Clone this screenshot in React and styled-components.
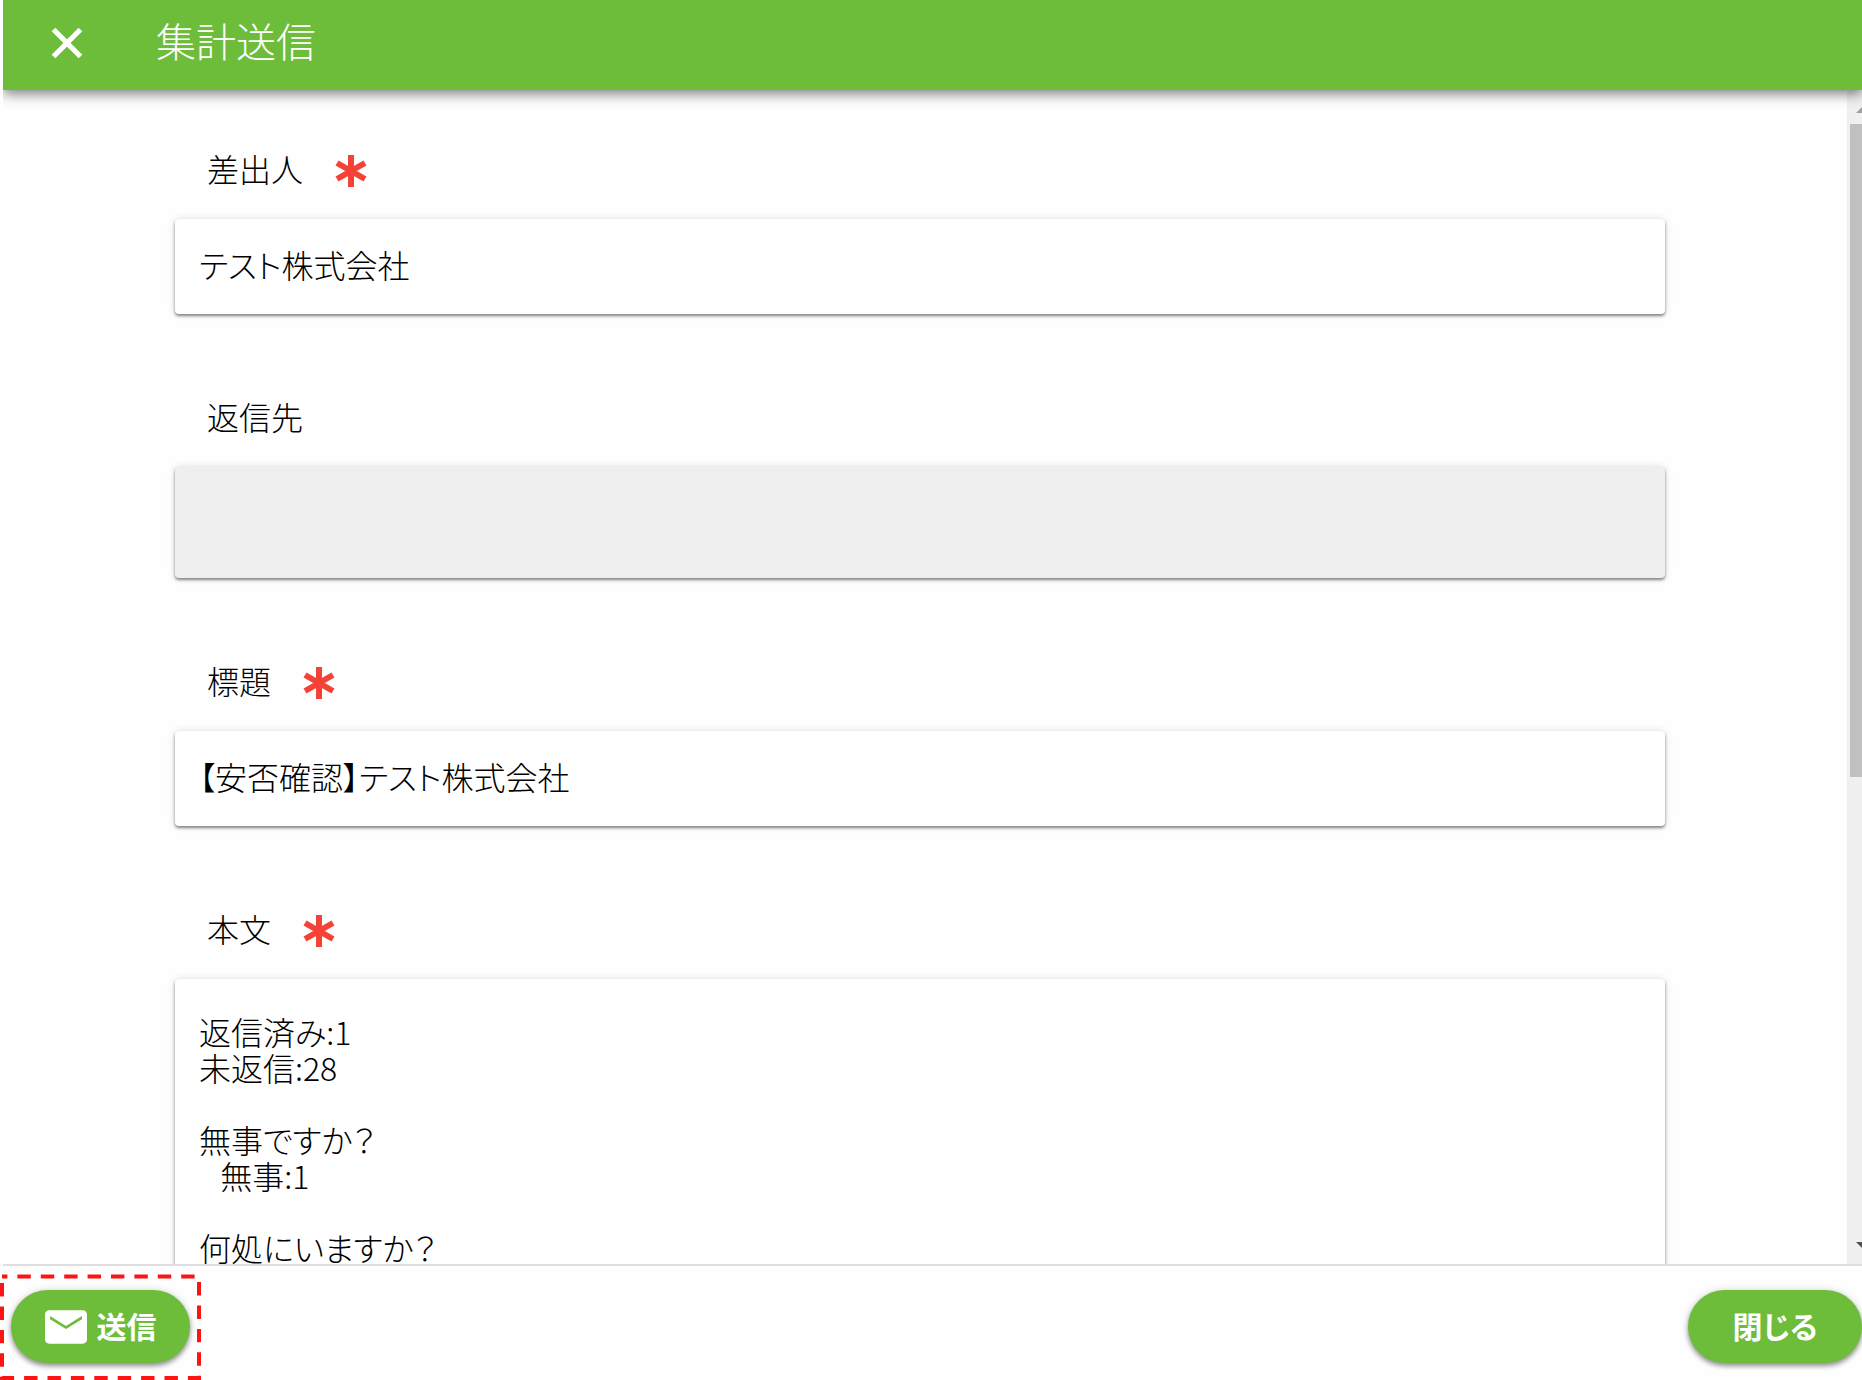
import React, { useState } from 'react'
import styled, { createGlobalStyle } from 'styled-components'

const GlobalStyle = createGlobalStyle`
    * {
        box-sizing: border-box;
    }

    body {
        margin: 0;
        background: #fefefe;
        color: #000;
        font-family: "Noto Sans CJK JP", sans-serif;
        font-feature-settings: "palt";
        font-weight: 300;
    }

    button, input, textarea {
        font: inherit;
        font-feature-settings: inherit;
        color: inherit;
    }
`

const Page = styled.div`
    display: flex;
    flex-direction: column;
    height: 100vh;
    padding-left: 3px;
    overflow: hidden;
`

const Header = styled.header`
    display: flex;
    align-items: center;
    flex: none;
    gap: 64px;
    height: 90px;
    padding: 0 39px 5px;
    background: #6dbd3b;
    color: #fff;
    box-shadow: 0 4px 12px rgba(0, 0, 0, .5);
    clip-path: inset(0 0 -20px 0);
    z-index: 1;
`

const IconButton = styled.button`
    display: flex;
    padding: 0;
    border: none;
    background: none;
    cursor: pointer;
`

const Title = styled.h1`
    margin: 0;
    padding-bottom: 6px;
    font-size: 40px;
    line-height: 48px;
    font-weight: 300;
    font-feature-settings: normal;
`

const Body = styled.div`
    display: flex;
    flex: 1;
    min-height: 0;
`

const Form = styled.form`
    display: flex;
    flex-direction: column;
    flex: 1;
    gap: 80px;
    padding: 56px 182px 56px 172px;
    overflow: auto;
    scrollbar-width: none;
`

const Field = styled.div`
    display: flex;
    flex-direction: column;
    flex: none;
    gap: 25px;
`

const Label = styled.label`
    display: flex;
    gap: 32px;
    height: 48px;
    padding-left: 32px;
    font-size: 32px;
    line-height: 44px;
`

const Mark = styled.svg`
    width: 32px;
    height: 34px;
    margin-top: 8px;
`

const Input = styled.input`
    width: 100%;
    height: ${p => p.disabled ? 111 : 95}px;
    padding: 0 24px 6px;
    border: none;
    border-radius: 4px;
    background: ${p => p.disabled ? '#efefef' : '#fff'};
    box-shadow: 0 2px 3px rgba(0, 0, 0, .45), 0 0 8px rgba(0, 0, 0, .12);
    font-size: 32px;
    outline: none;
`

const TextArea = styled(Input)`
    display: block;
    height: 560px;
    padding: 34px 24px;
    line-height: 36px;
    resize: none;
`

const ScrollBar = styled.div`
    display: flex;
    flex-direction: column;
    flex: none;
    width: 15px;
    padding-left: 3px;
    background: #f0f0f0;
`

const Arrow = styled.svg`
    display: block;
    flex: none;
    width: 12px;
    height: 34px;
`

const Track = styled.div`
    flex: 1;
`

const Thumb = styled.div`
    height: 59%;
    background: #c0c0c0;
`

const Footer = styled.footer`
    position: relative;
    display: flex;
    align-items: center;
    justify-content: space-between;
    flex: none;
    height: 116px;
    padding: 7px 0 0 8px;
    border-top: 2px solid #dedede;
`

const Button = styled.button`
    display: flex;
    align-items: center;
    justify-content: center;
    gap: 10px;
    min-width: ${p => p.$wide ? 174 : 179}px;
    height: 73px;
    padding: 0 24px;
    border: none;
    border-radius: 37px;
    background: #6dbd3b;
    color: #fff;
    box-shadow: 0 3px 5px rgba(0, 0, 0, .4), 0 0 8px rgba(0, 0, 0, .12);
    font-size: 30px;
    font-weight: 700;
    white-space: nowrap;
    cursor: pointer;
`

const ButtonText = styled.span`
    padding-bottom: 4px;
`

const Highlight = styled.svg`
    position: absolute;
    left: -3px;
    bottom: 0;
    pointer-events: none;
`

const CloseIcon = () =>
    <svg width="50" height="50" viewBox="0 0 24 24" fill="#fff" stroke="#fff" strokeWidth=".5" aria-hidden="true">
        <path d="M19 6.41L17.59 5 12 10.59 6.41 5 5 6.41 10.59 12 5 17.59 6.41 19 12 13.41 17.59 19 19 17.59 13.41 12z" />
    </svg>

const MailIcon = () =>
    <svg width="42" height="34" viewBox="2 4 20 16" fill="#fff" aria-hidden="true">
        <path d="M20 4H4c-1.1 0-1.99.9-1.99 2L2 18c0 1.1.9 2 2 2h16c1.1 0 2-.9 2-2V6c0-1.1-.9-2-2-2zm-.4 4.25l-7.6 4.75-7.6-4.75V6.8L12 11.5l7.6-4.7z" />
    </svg>

const RequiredMark = () =>
    <Mark viewBox="0 0 32 34" stroke="#f44336" strokeWidth="6" aria-hidden="true">
        <path d="M16 1v32M2 9l28 16M30 9L2 25" />
    </Mark>

const TextField = ({ id, label, required, multiline, ...rest }) => {
    const Control = multiline ? TextArea : Input

    return (
        <Field>
            <Label htmlFor={id}>
                {label}
                {required && <RequiredMark />}
            </Label>
            <Control
                id={id}
                as={multiline ? 'textarea' : undefined}
                required={required}
                spellCheck={false}
                {...rest} />
        </Field>
    )
}

const message = `返信済み:1
未返信:28

無事ですか？
   無事:1

何処にいますか？`

const App = () => {
    const [values, setValues] = useState({
        sender: 'テスト株式会社',
        replyTo: '',
        subject: '【安否確認】テスト株式会社',
        body: message
    })

    const bind = name => ({
        id: name,
        value: values[name],
        onChange: e => setValues({ ...values, [name]: e.target.value })
    })

    return (
        <Page>
            <GlobalStyle />
            <Header>
                <IconButton type="button" aria-label="閉じる">
                    <CloseIcon />
                </IconButton>
                <Title>集計送信</Title>
            </Header>
            <Body>
                <Form id="summary" onSubmit={e => e.preventDefault()}>
                    <TextField label="差出人" required {...bind('sender')} />
                    <TextField label="返信先" disabled {...bind('replyTo')} />
                    <TextField label="標題" required {...bind('subject')} />
                    <TextField label="本文" required multiline {...bind('body')} />
                </Form>
                <ScrollBar aria-hidden="true">
                    <Arrow viewBox="0 0 12 34">
                        <path d="M6 23L14 15V23z" fill="#a0a0a0" />
                    </Arrow>
                    <Track>
                        <Thumb />
                    </Track>
                    <Arrow viewBox="0 0 12 34">
                        <path d="M6 12H14V20z" fill="#505050" />
                    </Arrow>
                </ScrollBar>
            </Body>
            <Footer>
                <Button type="submit" form="summary">
                    <MailIcon />
                    <ButtonText>送信</ButtonText>
                </Button>
                <Button type="button" $wide>
                    <ButtonText>閉じる</ButtonText>
                </Button>
                <Highlight width="201" height="106" viewBox="0 0 201 106" aria-hidden="true">
                    <path
                        d="M2 2.5H199V104H2z"
                        fill="none"
                        stroke="#fb1414"
                        strokeWidth="4"
                        strokeDasharray="13.4 10"
                        strokeDashoffset="8" />
                </Highlight>
            </Footer>
        </Page>
    )
}

export default App
